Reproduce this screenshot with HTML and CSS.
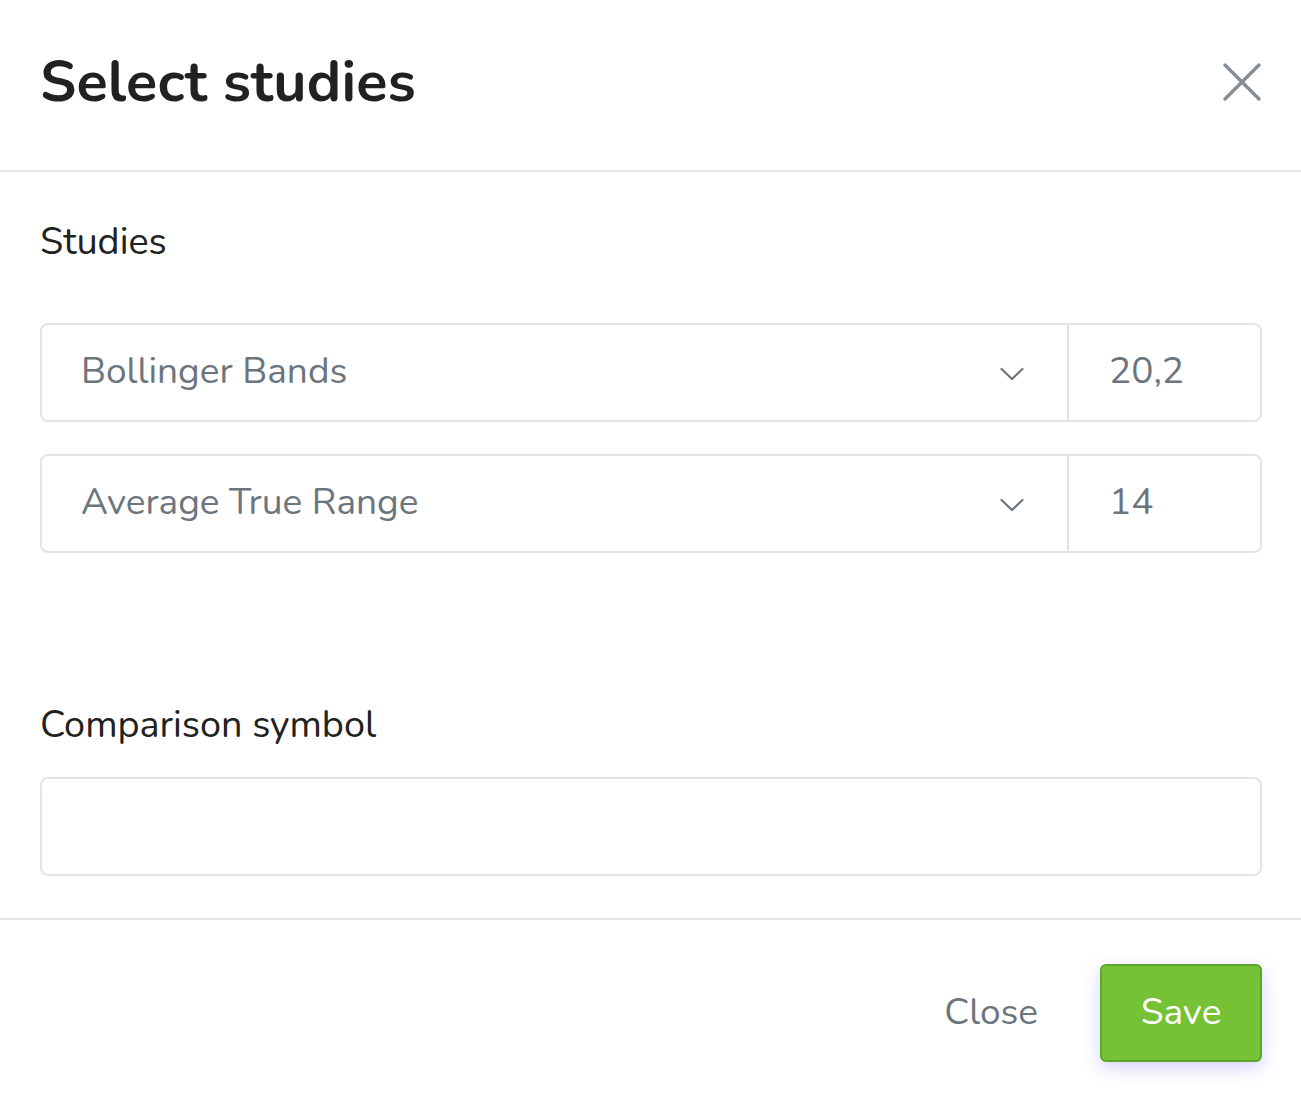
FILE: index.html
```html
<!DOCTYPE html>
<html lang="en">
<head>
<meta charset="utf-8">
<title>Select studies</title>
<link rel="stylesheet" href="styles.css">
</head>
<body>
<div class="modal">
  <header class="modal-header">
    <h1 class="modal-title">Select studies</h1>
    <button class="close-x" aria-label="Close">
      <svg width="40" height="40" viewBox="0 0 40 40"><path d="M3 3 L37 37 M37 3 L3 37" stroke="#878e96" stroke-width="3.4" stroke-linecap="round" fill="none"/></svg>
    </button>
  </header>
  <main class="modal-body">
    <div class="label">Studies</div>
    <div class="study-row">
      <div class="select">
        <span class="select-text">Bollinger Bands</span>
        <svg class="chev" width="24" height="14" viewBox="0 0 24 14"><path d="M1.5 2 L12 12 L22.5 2" stroke="#6c757d" stroke-width="2.2" fill="none" stroke-linecap="round" stroke-linejoin="round"/></svg>
      </div>
      <div class="param">20,2</div>
    </div>
    <div class="study-row">
      <div class="select">
        <span class="select-text">Average True Range</span>
        <svg class="chev" width="24" height="14" viewBox="0 0 24 14"><path d="M1.5 2 L12 12 L22.5 2" stroke="#6c757d" stroke-width="2.2" fill="none" stroke-linecap="round" stroke-linejoin="round"/></svg>
      </div>
      <div class="param">14</div>
    </div>
    <div class="label label-compare">Comparison symbol</div>
    <div class="text-input"></div>
  </main>
  <footer class="modal-footer">
    <button class="btn-close">Close</button>
    <button class="btn-save">Save</button>
  </footer>
</div>
</body>
</html>
```
FILE: styles.css
```css
html, body {
  margin: 0;
  padding: 0;
  background: #ffffff;
}
body {
  font-family: "Nunito", "Lato", "Open Sans", sans-serif;
  color: #212529;
}
.modal {
  width: 1301px;
}
.modal-header {
  height: 172px;
  border-bottom: 2px solid #e3e5e8;
  display: flex;
  align-items: center;
  justify-content: space-between;
  padding: 0 39px 6px 40px;
  box-sizing: border-box;
}
.modal-title {
  margin: 0;
  font-size: 57.5px;
  font-weight: 700;
  color: #212121;
  letter-spacing: 0.2px;
}
.close-x {
  border: 0;
  background: none;
  padding: 0;
  width: 40px;
  height: 40px;
  display: flex;
}
.modal-body {
  padding: 48px 39px 42px 40px;
}
.label {
  font-size: 37.8px;
  color: #212121;
  line-height: 44px;
  margin-bottom: 59px;
}
.label-compare {
  margin-top: 150px;
  margin-bottom: 30px;
}
.study-row {
  display: flex;
  height: 99px;
  box-sizing: border-box;
  border: 2px solid #e1e4e8;
  border-radius: 8px;
  margin-bottom: 32px;
}
.study-row:last-of-type {
  margin-bottom: 0;
}
.select {
  flex: 1;
  display: flex;
  align-items: center;
  justify-content: space-between;
  padding: 0 43px 0 39px;
  border-right: 2px solid #e1e4e8;
}
.select-text, .param {
  font-size: 37px;
  color: #6c757d;
  padding-bottom: 3px;
}
.chev {
  margin-top: 2px;
}
.param {
  width: 191px;
  display: flex;
  align-items: center;
  padding-left: 40px;
  box-sizing: border-box;
}
.text-input {
  height: 99px;
  box-sizing: border-box;
  border: 2px solid #e1e4e8;
  border-radius: 8px;
}
.modal-footer {
  border-top: 2px solid #e3e5e8;
  display: flex;
  justify-content: flex-end;
  align-items: center;
  padding: 44px 39px 42px 40px;
  gap: 62px;
}
.btn-close {
  border: 0;
  background: none;
  font-family: inherit;
  font-size: 37px;
  color: #6c757d;
  padding: 0 0 2px 0;
}
.btn-save {
  width: 162px;
  height: 98px;
  border: 2px solid #5ea62a;
  border-radius: 6px;
  background: #76c236;
  color: #ffffff;
  font-family: inherit;
  font-size: 37px;
  padding-bottom: 4px;
  box-shadow: 0 6px 18px rgba(110, 110, 240, 0.3);
}
```
